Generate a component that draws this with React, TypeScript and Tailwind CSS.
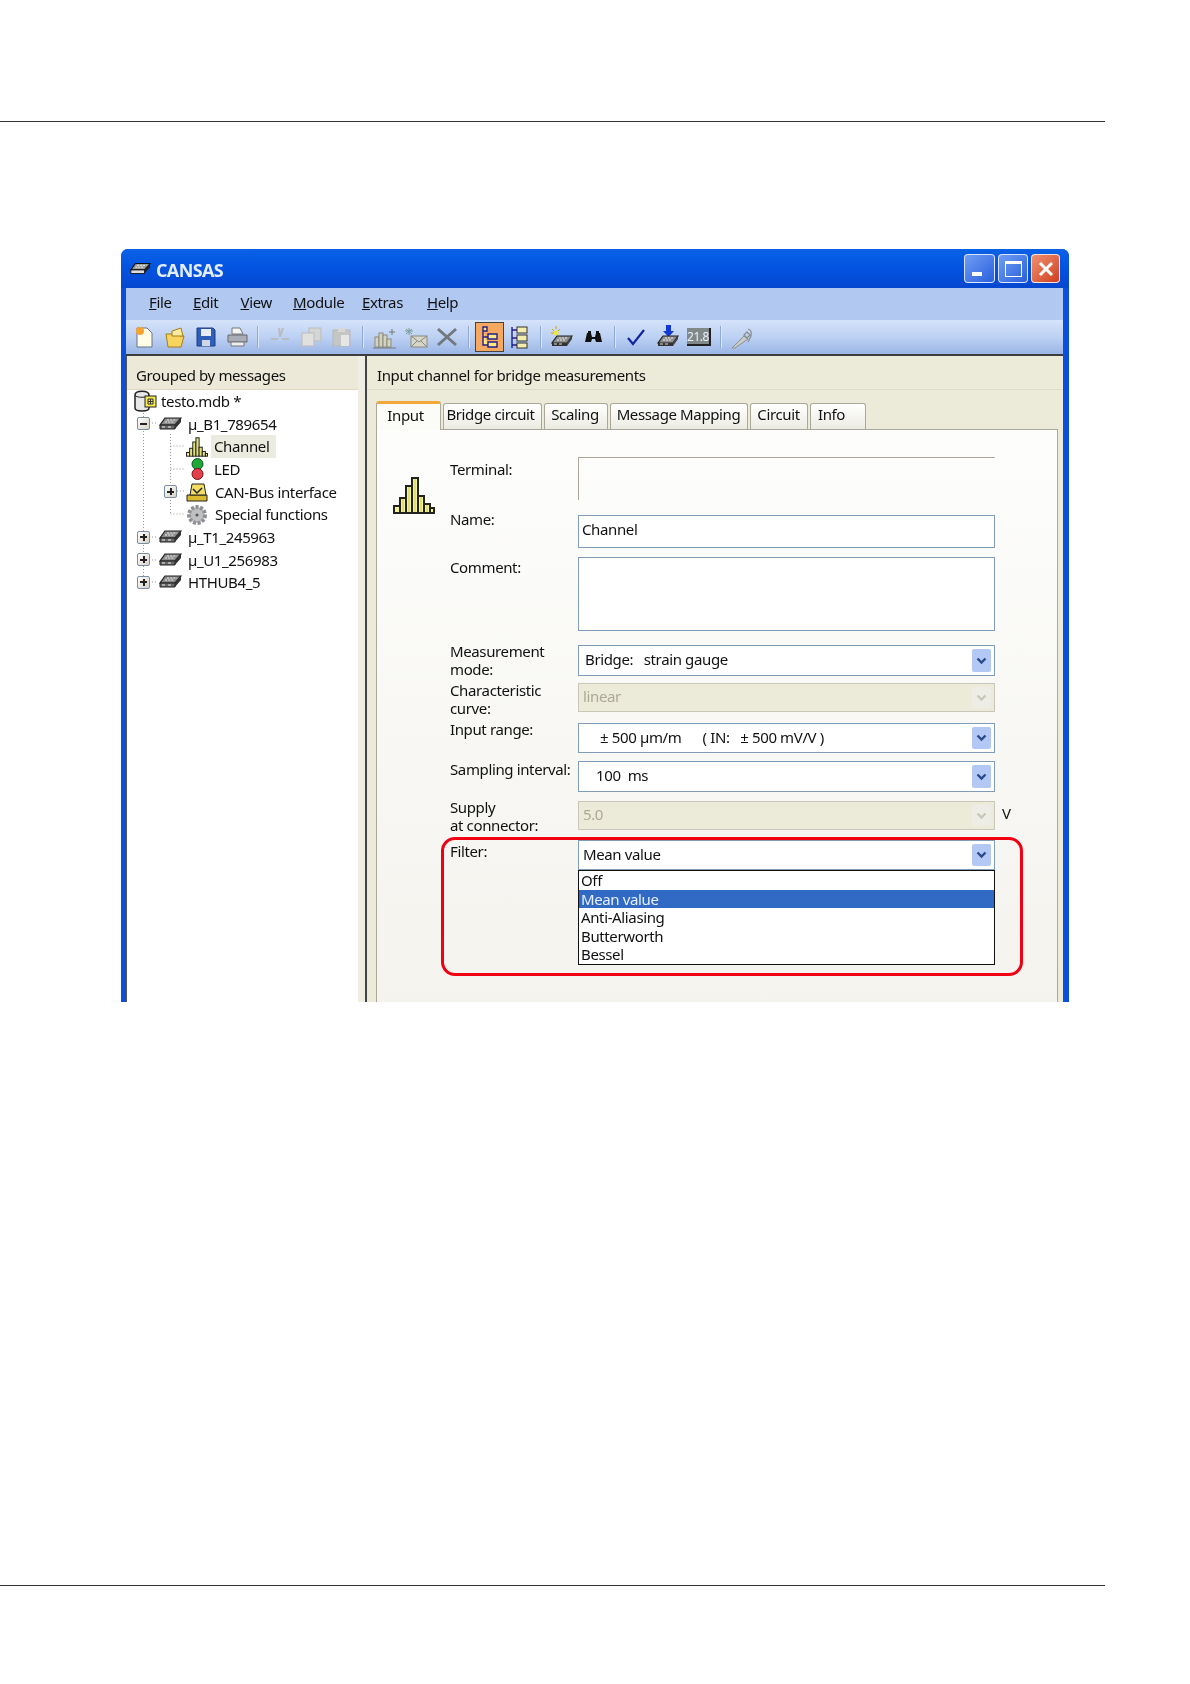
import React from "react";

const Module = ({ star, arrow }: { star?: boolean; arrow?: boolean }) => (
  <svg width="25" height="24" viewBox="0 0 25 24" className="shrink-0">
    {star && <path d="M7 1v3M3 4l2 2M11 4l-2 2M2 8h3" stroke="#c8a800" strokeWidth="1" />}
    {star && <circle cx="7" cy="8" r="2.5" fill="#f2e23a" />}
    {arrow && <path d="M11 0h5v6h3l-5.5 6L8 6h3z" fill="#1438d8" />}
    <path d="M8 11h15l-5 7H3z" fill="#8d8d8d" stroke="#222" strokeWidth="1.2" />
    <path d="M10 13h9M8 15h9" stroke="#eee" strokeWidth="1" strokeDasharray="2 1" />
    <path d="M3 18h15v3H3z" fill="#333" />
    <path d="M5 19h3M10 19h3" stroke="#ddd" strokeWidth="1.2" />
    <path d="M18 21l5-7v-3l-5 7z" fill="#444" />
  </svg>
);

const TreeModule = () => (
  <svg width="24" height="14" viewBox="0 0 24 14" className="shrink-0">
    <path d="M7 1h16l-6 7H2z" fill="#8b8b8b" stroke="#222" strokeWidth="1.2" />
    <path d="M9 3h10M7 5h9" stroke="#f0f0f0" strokeWidth="1" strokeDasharray="2 1.2" />
    <path d="M2 8h15v4H2z" fill="#666" stroke="#222" />
    <path d="M4 10h3M10 10h3" stroke="#eee" strokeWidth="1.2" />
    <path d="M17 12l6-7V1l-6 7z" fill="#333" />
  </svg>
);

const Histogram = ({ w, h }: { w: number; h: number }) => (
  <svg width={w} height={h} viewBox="0 0 42 37" className="shrink-0">
    <g fill="#f6f48e" stroke="#222" strokeWidth="2">
      <rect x="1" y="29" width="6" height="7" />
      <rect x="7" y="21" width="6" height="15" />
      <rect x="13" y="9" width="6" height="27" />
      <rect x="19" y="1" width="6" height="35" />
      <rect x="25" y="19" width="6" height="17" />
      <rect x="31" y="27" width="6" height="9" />
      <rect x="37" y="31" width="4" height="5" />
    </g>
    <path d="M16 10v25M22 2v33M10 22v13M28 20v15M34 28v7" stroke="#c9c75a" strokeWidth="1" />
  </svg>
);

const Expander = ({ minus }: { minus?: boolean }) => (
  <span className="w-[13px] h-[13px] shrink-0 border border-[#7d8ca5] rounded-[2px] bg-gradient-to-br from-white to-[#d5d2c4] flex items-center justify-center relative">
    <span className="absolute w-[7px] h-[2px] bg-[#222]" />
    {!minus && <span className="absolute w-[2px] h-[7px] bg-[#222]" />}
  </span>
);

const Sep = ({ ml }: { ml: string }) => <span className={`w-[2px] h-[22px] bg-[#8fa9d6] border-r border-white/70 shrink-0 ${ml}`} />;

const Arrow = ({ off }: { off?: boolean }) => (
  <span className={`w-[19px] mr-[3px] self-stretch my-[3px] rounded-[2px] flex items-center justify-center shrink-0 ${off ? "bg-[#eeede5]" : "bg-[#b4c8f6]"}`}>
    <svg width="11" height="8" viewBox="0 0 11 8"><path d="M1.5 1.5l4 4 4-4" fill="none" stroke={off ? "#c9c7ba" : "#2a4a8c"} strokeWidth="2.4" /></svg>
  </span>
);

const Combo = ({ children, off, pl, h }: { children: React.ReactNode; off?: boolean; pl: string; h: string }) => (
  <div className={`w-[417px] flex items-stretch border ${h} ${off ? "border-[#c9c7ba] bg-[#ecead9] text-[#aca899]" : "border-[#7f9db9] bg-white"}`}>
    <div className={`flex-1 flex items-center whitespace-pre pb-[2px] ${pl}`}>{children}</div>
    <Arrow off={off} />
  </div>
);

const Label = ({ children, mt }: { children: React.ReactNode; mt: string }) => (
  <div className={`w-[128px] shrink-0 leading-[18px] ${mt}`}>{children}</div>
);

const TreeRow = ({ pl, children }: { pl: string; children: React.ReactNode }) => (
  <div className={`h-[22.65px] flex items-center ${pl}`}>{children}</div>
);

const Tab = ({ children, w, pr }: { children: React.ReactNode; w: string; pr: string }) => (
  <div className={`${w} ${pr} h-[26px] pb-[4px] border border-b-0 border-[#aca899] rounded-t-[3px] bg-gradient-to-b from-white to-[#ecebe2] flex items-center justify-center`}>{children}</div>
);

export default function App() {
  return (
    <div className="w-[1190px] h-[1684px] bg-white flex flex-col text-[#111] text-[15px] tracking-[-0.37px] font-['Noto_Sans',sans-serif] overflow-hidden">
      <div className="h-[122px] w-[1105px] border-b border-[#333] shrink-0" />
      <div className="ml-[121px] mt-[127px] w-[948px] h-[753px] shrink-0 flex flex-col overflow-hidden rounded-t-[7px] bg-[#0a50dc] blur-[0.5px]">
        <div className="h-[39px] shrink-0 flex items-center pl-[8px] pr-[9px] bg-gradient-to-b from-[#0a62e6] via-[#0353e1] to-[#0547cf]">
          <svg width="22" height="14" viewBox="0 0 24 14" className="shrink-0">
            <path d="M7 1h16l-6 7H2z" fill="#9a9a9a" stroke="#111" strokeWidth="1.2" />
            <path d="M9 3h10M7 5h9" stroke="#fff" strokeWidth="1" strokeDasharray="2 1.2" />
            <path d="M2 8h15v4H2z" fill="#ddd" stroke="#111" />
            <path d="M17 12l6-7V1l-6 7z" fill="#222" />
          </svg>
          <span className="ml-[5px] pt-[4px] text-[#e4edff] font-bold text-[18px] tracking-[-0.6px] font-['Open_Sans',sans-serif]">CANSAS</span>
          <div className="ml-auto flex gap-[3px]">
            <div className="w-[31px] h-[29px] rounded-[4px] border border-white/80 bg-gradient-to-br from-[#6f9cf4] to-[#2a5fdc] flex items-end pl-[7px] pb-[6px]">
              <span className="w-[10px] h-[4px] bg-white" />
            </div>
            <div className="w-[30px] h-[29px] rounded-[4px] border border-white/80 bg-gradient-to-br from-[#6f9cf4] to-[#2a5fdc] flex items-center justify-center">
              <span className="w-[17px] h-[16px] border border-white border-t-[3px]" />
            </div>
            <div className="w-[29px] h-[29px] rounded-[4px] border border-white/80 bg-gradient-to-br from-[#ee9070] to-[#cf3d1c] flex items-center justify-center">
              <svg width="18" height="18" viewBox="0 0 18 18"><path d="M3 3l12 12M15 3L3 15" stroke="#fff" strokeWidth="3" /></svg>
            </div>
          </div>
        </div>
        <div className="flex-1 min-h-0 flex flex-col mx-[5px] mr-[6px]">
          <div className="h-[32px] shrink-0 pb-[4px] bg-[#b1c8f0] flex items-center whitespace-pre text-[15px] pl-[23px]">
            <span className="w-[44px]"><u>F</u>ile</span>
            <span className="w-[47.5px]"><u>E</u>dit</span>
            <span className="w-[52.5px]"><u>V</u>iew</span>
            <span className="w-[69px]"><u>M</u>odule</span>
            <span className="w-[65px]"><u>E</u>xtras</span>
            <span><u>H</u>elp</span>
          </div>
          <div className="h-[34px] shrink-0 bg-gradient-to-b from-[#d5e3fa] via-[#bdd1f3] to-[#9bb6e6] flex items-center">
            <svg className="ml-[9px] shrink-0" width="18" height="22" viewBox="0 0 18 22"><path d="M2 2h10l5 5v14H2z" fill="#fffde8" stroke="#6d7480" /><circle cx="5" cy="5" r="4" fill="#f7a32f" /></svg>
            <svg className="ml-[11px] shrink-0" width="22" height="21" viewBox="0 0 22 21"><path d="M2 7h6l2-2h6v4h4l-3 11H4z" fill="#f6d45e" stroke="#a67e14" /><path d="M8 4l9-3 2 8H8z" fill="#fbeaa0" stroke="#a67e14" /></svg>
            <svg className="ml-[10px] shrink-0" width="20" height="20" viewBox="0 0 20 20"><path d="M1 1h16l2 2v16H1z" fill="#2f5fb8" stroke="#1c3c86" /><rect x="5" y="2" width="10" height="7" fill="#e8edf5" /><rect x="6" y="13" width="8" height="6" fill="#cfd6e4" /></svg>
            <svg className="ml-[11px] shrink-0" width="21" height="20" viewBox="0 0 21 20"><path d="M5 1h8l3 6H5z" fill="#f5f5f5" stroke="#777" /><path d="M1 8h19v7H1z" fill="#a9adb8" stroke="#666" /><path d="M4 15h13v4H4z" fill="#eee" stroke="#777" /></svg>
            <Sep ml="ml-[9px]" />
            <svg className="ml-[11px] shrink-0" width="20" height="20" viewBox="0 0 20 20"><path d="M9 1l1 9M13 1l-3 9M1 12h7M12 12h7" stroke="#b8bcc0" strokeWidth="2" /></svg>
            <svg className="ml-[11px] shrink-0" width="21" height="20" viewBox="0 0 21 20"><rect x="8" y="1" width="12" height="13" fill="#d4d6d6" stroke="#bbb" /><rect x="1" y="6" width="12" height="13" fill="#e0e1de" stroke="#bbb" /></svg>
            <svg className="ml-[10px] shrink-0" width="19" height="20" viewBox="0 0 19 20"><rect x="1" y="3" width="17" height="16" fill="#c4c6c4" stroke="#b6b8b8" /><rect x="9" y="8" width="8" height="11" fill="#e6e7e4" /><rect x="6" y="1" width="7" height="4" fill="#d8d8d8" /></svg>
            <Sep ml="ml-[11px]" />
            <svg className="ml-[8px] shrink-0" width="25" height="23" viewBox="0 0 25 23"><g fill="#d3d4c0" stroke="#8a8a7c"><rect x="3" y="11" width="4" height="10" /><rect x="7" y="7" width="4" height="14" /><rect x="11" y="9" width="4" height="12" /><rect x="15" y="13" width="4" height="8" /></g><path d="M1 22h23M20 3v6M17 6h6" stroke="#777" /></svg>
            <svg className="ml-[7px] shrink-0" width="24" height="21" viewBox="0 0 24 21"><rect x="7" y="9" width="16" height="11" fill="#d5d5c8" stroke="#8a8a7c" /><path d="M7 9l8 6 8-6M7 20l6-6M23 20l-6-6" fill="none" stroke="#888" /><path d="M5 1v7M1 4h8M2 2l6 5M8 2L2 7" stroke="#7a9a9a" /></svg>
            <svg className="ml-[8px] shrink-0" width="22" height="20" viewBox="0 0 22 20"><path d="M2 2l18 16M20 2L2 18" stroke="#73777e" strokeWidth="3" /></svg>
            <Sep ml="ml-[10px]" />
            <div className="ml-[5px] w-[29px] h-[30px] shrink-0 bg-[#f6a860] border border-[#444] flex items-center justify-center">
              <svg width="20" height="22" viewBox="0 0 20 22"><path d="M3 1h4v4H3zM3 5v14h5M3 11h5" fill="#ffe680" stroke="#20208a" strokeWidth="1.4" /><path d="M8 8h9v5H8zM8 16h9v5H8z" fill="#ffe680" stroke="#20208a" strokeWidth="1.4" /></svg>
            </div>
            <svg className="ml-[6px] shrink-0" width="18" height="23" viewBox="0 0 18 23"><path d="M2 1v21M2 4h5M2 12h5M2 19h5" stroke="#20208a" strokeWidth="1.4" fill="none" /><g fill="#f4ecb0" stroke="#333"><rect x="7" y="1" width="10" height="6" /><rect x="7" y="9" width="10" height="6" /><rect x="7" y="17" width="10" height="5" /></g></svg>
            <Sep ml="ml-[12px]" />
            <div className="ml-[7px] shrink-0"><Module star /></div>
            <svg className="ml-[11px] shrink-0" width="17" height="15" viewBox="0 0 17 15"><path d="M2 3h4l1 4h3l1-4h4l2 9h-6l-1-3H7l-1 3H0z" fill="#111" /><rect x="3" y="1" width="3" height="3" fill="#111" /><rect x="11" y="1" width="3" height="3" fill="#111" /></svg>
            <Sep ml="ml-[12px]" />
            <svg className="ml-[10px] shrink-0" width="19" height="18" viewBox="0 0 19 18"><path d="M2 10l5 6L18 2" fill="none" stroke="#1226a0" strokeWidth="2.2" /></svg>
            <div className="ml-[10px] shrink-0"><Module arrow /></div>
            <div className="ml-[7px] w-[24px] h-[18px] shrink-0 bg-[#7f8a88] border-r-2 border-b-2 border-[#222] text-[#eef] text-[12px] leading-[17px] text-center tracking-[-0.5px]">21.8</div>
            <Sep ml="ml-[9px]" />
            <svg className="ml-[8px] shrink-0" width="24" height="23" viewBox="0 0 24 23"><path d="M2 22l12-12 4 3L5 22z" fill="#c9cbc6" stroke="#8a8f90" /><path d="M14 9l3-3 3 3-3 3zM18 3c3 1 4 3 3 7l-3 6" fill="none" stroke="#8a8f90" strokeWidth="1.3" /></svg>
          </div>
          <div className="flex-1 min-h-0 flex bg-[#ece9d8] border-t-2 border-[#3d3d3d]">
            <div className="w-[232px] shrink-0 flex flex-col border-l border-[#555]">
              <div className="h-[34px] shrink-0 pt-[6px] bg-[#ece9d8] flex items-center pl-[9px] border-b border-[#dedbc9]">Grouped by messages</div>
              <div className="flex-1 bg-white relative">
                <svg className="absolute left-0 top-0" width="100" height="210">
                  <g stroke="#999" strokeDasharray="1 2" fill="none">
                    <path d="M16.5 20V193M43.5 44V124M43.5 56H58M43.5 79H58M43.5 124H58M22 33H31M22 147H31M22 170H31M22 192H31M50 101H58" />
                  </g>
                </svg>
                <div className="relative">
                  <TreeRow pl="pl-[6px]">
                    <svg width="24" height="22" viewBox="0 0 24 22" className="shrink-0"><path d="M2 5c0-5 14-5 14 0v13c0 4-14 4-14 0z" fill="#e8e8e8" stroke="#222" strokeWidth="1.5" /><path d="M2 5c0 3 14 3 14 0" fill="none" stroke="#222" /><rect x="12" y="6" width="11" height="11" fill="#f4e94e" stroke="#222" /><path d="M15 9h5v5h-5zM17.5 9v5M15 11.5h5" fill="none" stroke="#333" /></svg>
                    <span className="ml-[4px]">testo.mdb *</span>
                  </TreeRow>
                  <TreeRow pl="pl-[10px]"><Expander minus /><span className="ml-[8px] flex"><TreeModule /></span><span className="ml-[6px]">µ_B1_789654</span></TreeRow>
                  <TreeRow pl="pl-[59px]">
                    <Histogram w={22} h={22} />
                    <span className="ml-[3px] h-[23px] pl-[3px] pr-[7px] bg-[#ecebdf] flex items-center">Channel</span>
                  </TreeRow>
                  <TreeRow pl="pl-[64px]">
                    <svg width="13" height="22" viewBox="0 0 13 22" className="shrink-0"><circle cx="6.5" cy="6" r="5.5" fill="#1fa83a" stroke="#0d5a1d" /><circle cx="6.5" cy="16" r="5.5" fill="#e2404a" stroke="#7a1019" /></svg>
                    <span className="ml-[10px]">LED</span>
                  </TreeRow>
                  <TreeRow pl="pl-[37px]">
                    <Expander />
                    <svg className="ml-[9px] shrink-0" width="22" height="20" viewBox="0 0 22 20"><path d="M1 13h20v6H1z" fill="#d9b92e" stroke="#222" /><path d="M4 13l2-11h12l2 11z" fill="#f1de62" stroke="#222" /><path d="M7 7l4 4 5-5" fill="none" stroke="#222" strokeWidth="1.5" /></svg>
                    <span className="ml-[7px]">CAN-Bus interface</span>
                  </TreeRow>
                  <TreeRow pl="pl-[59px]">
                    <svg width="22" height="22" viewBox="0 0 22 22" className="shrink-0"><circle cx="11" cy="11" r="8" fill="#bfc0c2" stroke="#8f9194" strokeWidth="4" strokeDasharray="3 1.5" /><circle cx="11" cy="11" r="1.5" fill="#555" /></svg>
                    <span className="ml-[7px]">Special functions</span>
                  </TreeRow>
                  <TreeRow pl="pl-[10px]"><Expander /><span className="ml-[8px] flex"><TreeModule /></span><span className="ml-[6px]">µ_T1_245963</span></TreeRow>
                  <TreeRow pl="pl-[10px]"><Expander /><span className="ml-[8px] flex"><TreeModule /></span><span className="ml-[6px]">µ_U1_256983</span></TreeRow>
                  <TreeRow pl="pl-[10px]"><Expander /><span className="ml-[8px] flex"><TreeModule /></span><span className="ml-[6px]">HTHUB4_5</span></TreeRow>
                </div>
              </div>
            </div>
            <div className="w-[9px] shrink-0 bg-[#f0eee2] border-r-2 border-[#444]" />
            <div className="flex-1 min-w-0 flex flex-col bg-[#ecead9]">
              <div className="h-[34px] shrink-0 pt-[6px] flex items-center pl-[10px] border-b border-[#dedbc9]">Input channel for bridge measurements</div>
              <div className="pl-[9px] h-[39px] shrink-0 flex items-end gap-[2px] pr-[5px]">
                <div className="w-[65px] h-[29px] pb-[4px] pr-[6px] bg-[#fbfbf8] border-x border-[#aca899] border-t-[3px] border-t-[#f0a83a] rounded-t-[3px] flex items-center justify-center -mb-[1px] relative">Input</div>
                <Tab w="w-[99px]" pr="pr-[4px]">Bridge circuit</Tab>
                <Tab w="w-[64px]" pr="pr-[2px]">Scaling</Tab>
                <Tab w="w-[138px]" pr="pr-[1px]">Message Mapping</Tab>
                <Tab w="w-[58px]" pr="pr-[1px]">Circuit</Tab>
                <Tab w="w-[56px]" pr="pr-[13px]">Info</Tab>
              </div>
              <div className="flex-1 min-h-0 ml-[9px] mr-[5px] border border-b-0 border-[#aca899] bg-gradient-to-b from-[#fdfdfc] to-[#f4f3ee] flex pt-[27px]">
                <div className="w-[73px] shrink-0 pl-[16px] pt-[20px]"><Histogram w={42} h={37} /></div>
                <div className="flex flex-col leading-none">
                  <div className="flex h-[43px] mb-[15px]">
                    <Label mt="mt-[3px]">Terminal:</Label>
                    <div className="w-[417px] border-l border-t border-[#aca899]" />
                  </div>
                  <div className="flex h-[33px] mb-[9px]">
                    <Label mt="-mt-[5px]">Name:</Label>
                    <div className="w-[417px] border border-[#7f9db9] bg-white flex items-center pl-[3px] pb-[4px]">Channel</div>
                  </div>
                  <div className="flex h-[74px] mb-[14px]">
                    <Label mt="mt-[1px]">Comment:</Label>
                    <div className="w-[417px] border border-[#7f9db9] bg-white" />
                  </div>
                  <div className="flex h-[31px] mb-[7px]">
                    <Label mt="-mt-[3px]">Measurement<br />mode:</Label>
                    <Combo pl="pl-[6px]" h="h-[31px]">Bridge:   strain gauge</Combo>
                  </div>
                  <div className="flex h-[29px] mb-[11px]">
                    <Label mt="-mt-[2px]">Characteristic<br />curve:</Label>
                    <Combo off pl="pl-[4px]" h="h-[29px]">linear</Combo>
                  </div>
                  <div className="flex h-[30px] mb-[8px]">
                    <Label mt="-mt-[3px]">Input range:</Label>
                    <Combo pl="pl-[21px]" h="h-[30px]">± 500 µm/m      ( IN:   ± 500 mV/V )</Combo>
                  </div>
                  <div className="flex h-[31px] mb-[9px]">
                    <Label mt="-mt-[1px]">Sampling interval:</Label>
                    <Combo pl="pl-[17px]" h="h-[31px]">100  ms</Combo>
                  </div>
                  <div className="flex h-[29px] mb-[7px]">
                    <Label mt="-mt-[3px]">Supply<br />at connector:</Label>
                    <Combo off pl="pl-[4px]" h="h-[29px]">5.0</Combo>
                    <span className="ml-[7px] mt-[3px] leading-[18px]">V</span>
                  </div>
                  <div className="-ml-[9px] w-[582px] h-[139px] border-[3px] border-[#f00012] rounded-[14px] pl-[6px] flex">
                    <Label mt="mt-[2px]">Filter:</Label>
                    <div className="flex flex-col">
                      <Combo pl="pl-[4px]" h="h-[30px]">Mean value</Combo>
                      <div className="w-[417px] h-[95px] border border-[#111] bg-white leading-[18.5px] pl-[2px]">
                        <div className="h-[18.5px]">Off</div>
                        <div className="h-[18.5px] -ml-[2px] pl-[2px] bg-[#316ac5] text-[#e8f0ff]">Mean value</div>
                        <div className="h-[18.5px]">Anti-Aliasing</div>
                        <div className="h-[18.5px]">Butterworth</div>
                        <div className="h-[18.5px]">Bessel</div>
                      </div>
                    </div>
                  </div>
                </div>
              </div>
            </div>
          </div>
        </div>
      </div>
      <div className="mt-[583px] w-[1105px] border-t border-[#333] shrink-0" />
    </div>
  );
}
